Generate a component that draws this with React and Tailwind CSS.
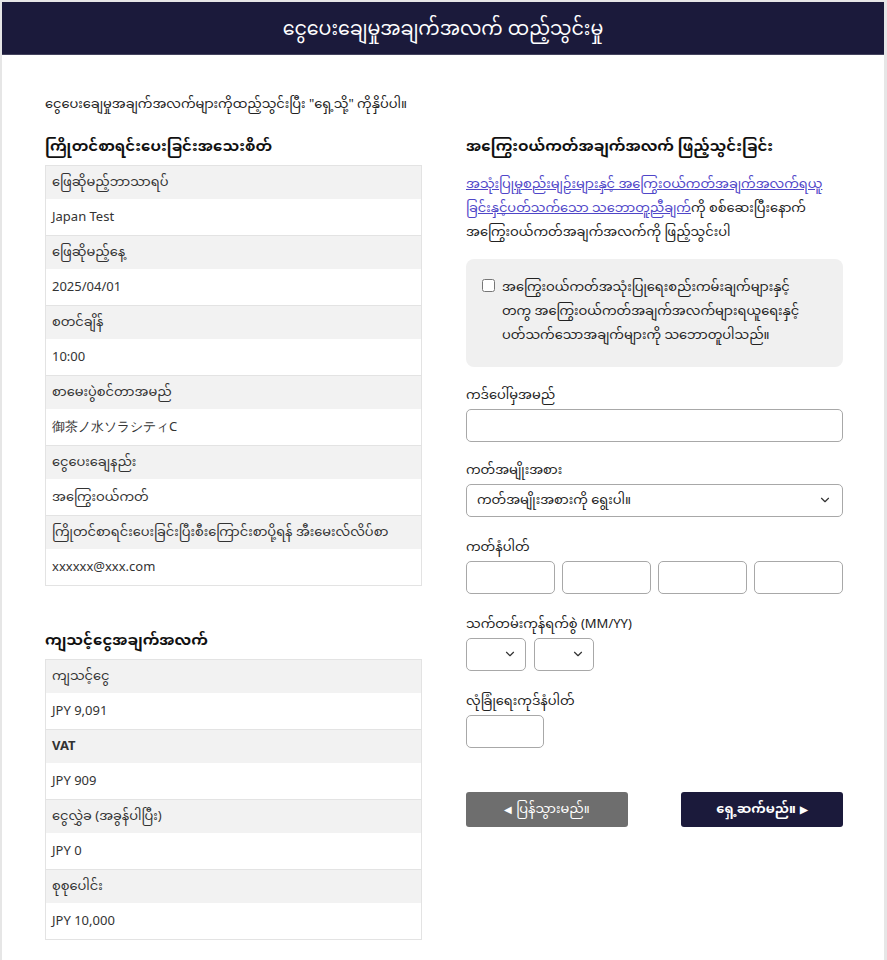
import { ChevronDown } from 'lucide-react';

const examRows = [
  { label: 'ဖြေဆိုမည့်ဘာသာရပ်', value: 'Japan Test' },
  { label: 'ဖြေဆိုမည့်နေ့', value: '2025/04/01' },
  { label: 'စတင်ချိန်', value: '10:00' },
  { label: 'စာမေးပွဲစင်တာအမည်', value: '御茶ノ水ソラシティC' },
  { label: 'ငွေပေးချေနည်း', value: 'အကြွေးဝယ်ကတ်' },
  { label: 'ကြိုတင်စာရင်းပေးခြင်းပြီးစီးကြောင်းစာပို့ရန် အီးမေးလ်လိပ်စာ', value: 'xxxxxx@xxx.com' },
];

const feeRows = [
  { label: 'ကျသင့်ငွေ', value: 'JPY 9,091' },
  { label: 'VAT', value: 'JPY 909', bold: true },
  { label: 'ငွေလွှဲခ (အခွန်ပါပြီး)', value: 'JPY 0' },
  { label: 'စုစုပေါင်း', value: 'JPY 10,000' },
];

const InfoTable = ({ rows }) => (
  <div className="border border-[#e3e3e3]">
    {rows.map((row, i) => (
      <div key={i} className={i > 0 ? 'border-t border-[#e3e3e3]' : ''}>
        <div
          className={`bg-[#f2f2f2] px-[6px] h-[33px] flex items-center text-[13px] text-[#333] ${
            row.bold ? 'font-bold' : ''
          }`}
        >
          {row.label}
        </div>
        <div className="px-[6px] h-[36px] flex items-center text-[13px] text-[#333]">
          {row.value}
        </div>
      </div>
    ))}
  </div>
);

const SelectBox = ({ className, children }) => (
  <div
    className={`h-[33px] border border-[#a8a8a8] rounded-[5px] flex items-center justify-between bg-white ${className}`}
  >
    <span className="text-[13px] text-[#222]">{children}</span>
    <ChevronDown className="w-[14px] h-[14px] text-[#333]" strokeWidth={2} />
  </div>
);

const TextBox = ({ className }) => (
  <div className={`h-[33px] border border-[#a8a8a8] rounded-[5px] bg-white ${className}`}></div>
);

const FieldLabel = ({ className, children }) => (
  <label className={`text-[13px] text-[#222] h-[28px] flex items-center ${className}`}>{children}</label>
);

const App = () => {
  return (
    <div className="min-h-[960px] bg-[#e6e6e6] pt-[2px] pl-[2px] pr-[3px] pb-[3px] font-['Noto_Sans','Noto_Sans_Myanmar','Myanmar_Text','Padauk',sans-serif]">
      <div className="bg-white min-h-[955px]">
        {/* Header */}
        <div className="h-[53px] bg-[#1b1a3b] border-b border-[#44435e] flex items-center justify-center">
          <h1 className="text-white text-[19px]">ငွေပေးချေမှုအချက်အလက် ထည့်သွင်းမှု</h1>
        </div>

        <div className="pl-[43px] pr-[41px] pt-[39px] pb-[20px]">
          <p className="text-[13px] text-[#222] mb-[19px]">
            ငွေပေးချေမှုအချက်အလက်များကိုထည့်သွင်းပြီး "ရှေ့သို့" ကိုနှိပ်ပါ။
          </p>

          <div className="grid grid-cols-2 gap-[44px]">
            {/* Left column */}
            <div>
              <h2 className="text-[15px] font-bold text-[#111] h-[26px] flex items-center mb-[6px]">
                ကြိုတင်စာရင်းပေးခြင်းအသေးစိတ်
              </h2>
              <InfoTable rows={examRows} />

              <h2 className="text-[15px] font-bold text-[#111] h-[26px] flex items-center mt-[41px] mb-[6px]">
                ကျသင့်ငွေအချက်အလက်
              </h2>
              <InfoTable rows={feeRows} />
            </div>

            {/* Right column */}
            <div>
              <h2 className="text-[15px] font-bold text-[#111] h-[26px] flex items-center mb-[6px]">
                အကြွေးဝယ်ကတ်အချက်အလက် ဖြည့်သွင်းခြင်း
              </h2>
              <p className="mt-[12px] text-[13px] leading-[24px] text-[#222]">
                <a href="#" className="text-[#4f46c8] underline">
                  အသုံးပြုမှုစည်းမျဉ်းများနှင့် အကြွေးဝယ်ကတ်အချက်အလက်ရယူခြင်းနှင့်ပတ်သက်သော သဘောတူညီချက်
                </a>
                ကို စစ်ဆေးပြီးနောက် အကြွေးဝယ်ကတ်အချက်အလက်ကို ဖြည့်သွင်းပါ
              </p>

              <div className="mt-[16px] bg-[#f0f0f0] rounded-[8px] pl-[16px] pr-[14px] pt-[15px] pb-[21px] flex gap-[7px]">
                <input
                  type="checkbox"
                  className="mt-[5px] w-[13px] h-[13px] shrink-0 accent-[#1b1a3b]"
                />
                <span className="text-[13px] leading-[24px] text-[#222]">
                  အကြွေးဝယ်ကတ်အသုံးပြုရေးစည်းကမ်းချက်များနှင့်
                  <br />
                  တကွ အကြွေးဝယ်ကတ်အချက်အလက်များရယူရေးနှင့်
                  <br />
                  ပတ်သက်သောအချက်များကို သဘောတူပါသည်။
                </span>
              </div>

              <div className="mt-[14px] flex flex-col">
                <FieldLabel>ကဒ်ပေါ်မှအမည်</FieldLabel>
                <TextBox className="w-full" />

                <FieldLabel className="mt-[14px]">ကတ်အမျိုးအစား</FieldLabel>
                <SelectBox className="w-full px-[10px]">ကတ်အမျိုးအစားကို ရွေးပါ။</SelectBox>

                <FieldLabel className="mt-[16px]">ကတ်နံပါတ်</FieldLabel>
                <div className="grid grid-cols-4 gap-[7px]">
                  <TextBox />
                  <TextBox />
                  <TextBox />
                  <TextBox />
                </div>

                <FieldLabel className="mt-[16px]">သက်တမ်းကုန်ရက်စွဲ (MM/YY)</FieldLabel>
                <div className="flex gap-[8px]">
                  <SelectBox className="w-[60px] pl-[6px] pr-[8px]"></SelectBox>
                  <SelectBox className="w-[60px] pl-[6px] pr-[8px]"></SelectBox>
                </div>

                <FieldLabel className="mt-[16px]">လုံခြုံရေးကုဒ်နံပါတ်</FieldLabel>
                <TextBox className="w-[78px]" />
              </div>

              <div className="mt-[44px] flex justify-between">
                <button className="w-[162px] h-[35px] rounded-[3px] bg-[#6e6e6e] text-white text-[13px] flex items-center justify-center gap-[4px]">
                  <span className="text-[10px]">◀</span>
                  <span>ပြန်သွားမည်။</span>
                </button>
                <button className="w-[162px] h-[35px] rounded-[3px] bg-[#1b1a3b] text-white text-[13px] font-bold flex items-center justify-center gap-[4px]">
                  <span>ရှေ့ဆက်မည်။</span>
                  <span className="text-[10px]">▶</span>
                </button>
              </div>
            </div>
          </div>
        </div>
      </div>
    </div>
  );
};

export default App;
